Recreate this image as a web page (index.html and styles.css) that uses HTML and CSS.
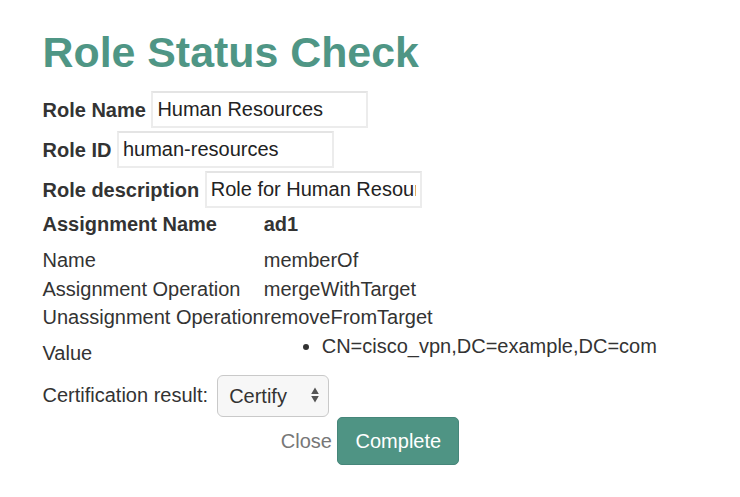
FILE: index.html
```html
<!DOCTYPE html>
<html>
<head>
<meta charset="utf-8">
<title>Role Status Check</title>
<link rel="stylesheet" href="styles.css">
</head>
<body>
<div class="page">
  <h2 class="title">Role Status Check</h2>
  <div class="field"><label class="lbl">Role Name</label><input class="txt" type="text" value="Human Resources"></div>
  <div class="field"><label class="lbl">Role ID</label><input class="txt" type="text" value="human-resources"></div>
  <div class="field"><label class="lbl">Role description</label><input class="txt" type="text" value="Role for Human Resources"></div>
  <table class="assign">
    <tr class="head"><th>Assignment Name</th><th>ad1</th></tr>
    <tr><td>Name</td><td>memberOf</td></tr>
    <tr><td>Assignment Operation</td><td>mergeWithTarget</td></tr>
    <tr><td>Unassignment Operation</td><td>removeFromTarget</td></tr>
    <tr><td>Value</td><td><ul class="vals"><li>CN=cisco_vpn,DC=example,DC=com</li></ul></td></tr>
  </table>
  <div class="cert">
    <span class="cert-lbl">Certification result:</span>
    <span class="sel-wrap">
      <select class="sel"><option>Certify</option><option>Revoke</option></select>
      <svg class="sel-arrows" width="10" height="17" viewBox="0 0 10 17"><path d="M5 0.5 L8.8 7 L1.2 7 Z M1.2 9 L8.8 9 L5 15.5 Z" fill="#555"/></svg>
    </span>
  </div>
  <div class="actions"><a class="close" href="#">Close</a> <button class="btn" type="button">Complete</button></div>
</div>
</body>
</html>
```

FILE: styles.css
```css
html, body {
  margin: 0;
  padding: 0;
  background: #fff;
}
body {
  font-family: "Liberation Sans", Arial, Helvetica, sans-serif;
  font-size: 20px;
  line-height: 28.57px;
  color: #333;
}
.page {
  padding: 0 42.5px;
}
.title {
  margin: 28.6px 0 14.3px;
  font-size: 42.86px;
  line-height: 47.1px;
  font-weight: bold;
  color: #4f9685;
}
.field {
  height: 40px;
  display: flex;
  align-items: center;
}
.lbl {
  font-weight: bold;
  margin-right: 5.5px;
}
.txt {
  box-sizing: border-box;
  width: 217px;
  height: 37px;
  margin: 0;
  padding: 0 4px;
  border: 2px solid #ececec;
  border-top-color: #e4e4e4;
  font-family: inherit;
  font-size: 20px;
  color: #222;
  background: #fff;
  outline: none;
}
.assign {
  border-collapse: collapse;
  border-spacing: 0;
}
.assign th, .assign td {
  padding: 0;
  text-align: left;
  vertical-align: middle;
}
.assign th {
  font-weight: bold;
}
.assign tr > :first-child {
  width: 220px;
  white-space: nowrap;
}
.assign .head th {
  padding-top: 0.5px;
  padding-bottom: 7px;
  vertical-align: top;
}
.vals {
  margin: 0 0 14.3px;
  padding-left: 58px;
}
.cert {
  display: flex;
  align-items: center;
  height: 42px;
}
.cert-lbl {
  margin-right: 9px;
}
.sel-wrap {
  position: relative;
  display: inline-block;
}
.sel {
  -webkit-appearance: none;
  appearance: none;
  box-sizing: border-box;
  width: 112px;
  height: 42px;
  margin: 0;
  padding: 0 0 0 11px;
  border: 1px solid #c9c9c9;
  border-radius: 6px;
  background: #f7f7f7;
  font-family: inherit;
  font-size: 20px;
  color: #333;
  display: block;
}
.sel-arrows {
  position: absolute;
  right: 9px;
  top: 12.5px;
  pointer-events: none;
}
.actions {
  text-align: center;
}
.close {
  color: #777;
  text-decoration: none;
}
.btn {
  font-family: inherit;
  font-size: 20px;
  line-height: 28.57px;
  color: #fff;
  background: #4f9484;
  border: 1.4px solid #46867a;
  border-radius: 5px;
  padding: 9px 17.1px;
  margin: 0;
  vertical-align: baseline;
}
```
